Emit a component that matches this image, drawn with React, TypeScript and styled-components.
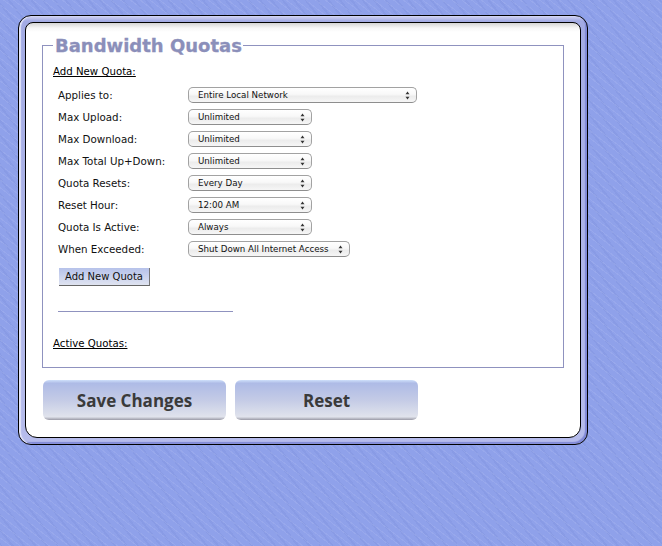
import React from 'react';
import styled, { createGlobalStyle } from 'styled-components';

const GlobalStyle = createGlobalStyle`
  html, body {
    margin: 0;
    padding: 0;
    height: 100%;
    background-color: #8fa1ea;
    background-image:
      repeating-linear-gradient(38deg, rgba(255,255,255,0.08) 0 1px, transparent 1px 6px),
      repeating-linear-gradient(52deg, rgba(60,80,170,0.07) 0 2px, transparent 2px 9px);
    font-family: "DejaVu Sans", Verdana, sans-serif;
  }
`;

const Page = styled.div`
  width: 662px;
  height: 546px;
  padding: 15px 0 0 18px;
  box-sizing: border-box;
  overflow: hidden;
`;

const Frame = styled.div`
  width: 570px;
  height: 430px;
  box-sizing: border-box;
  border: 1px solid #000;
  border-radius: 13px;
  padding: 6px;
  background: linear-gradient(to bottom, #d4d6f4 0, #a3abe4 5px, #b6bcec 100%);
  box-shadow: inset 2px 0 1px #e2e4f8, inset -2px -2px 1px #7f88d6;
`;

const Inner = styled.div`
  height: 100%;
  box-sizing: border-box;
  border: 1px solid #000;
  border-radius: 8px 8px 12px 12px;
  background: linear-gradient(to bottom, #d4d4d4 0, #f6f6f6 5px, #fff 9px);
  padding: 10px 16px 0 16px;
`;

const Fieldset = styled.fieldset`
  margin: 0;
  width: 522px;
  height: 335px;
  box-sizing: border-box;
  border: 1px solid #8f92bf;
  padding: 8px 10px 0;
`;

const Legend = styled.legend`
  margin-left: 0;
  padding: 2px 1px 0 2px;
  font-family: "DejaVu Sans", Verdana, sans-serif;
  font-size: 18px;
  line-height: 22px;
  font-weight: 700;
  color: #8b8fba;
  -webkit-text-stroke: 0.3px #8b8fba;
`;

const SectionTitle = styled.div`
  font-size: 10.2px;
  line-height: 14px;
  color: #000;
  text-decoration: underline;
`;

const Rows = styled.div`
  margin: 8px 0 0 5px;
  display: flex;
  flex-direction: column;
  gap: 6px;
`;

const Row = styled.div`
  display: flex;
  align-items: center;
  height: 16px;
`;

const Label = styled.span`
  width: 130px;
  font-size: 10.3px;
  line-height: 14px;
  margin-top: -1px;
  color: #111;
  white-space: nowrap;
`;

const Select = styled.div<{ $width: number }>`
  width: ${(props) => props.$width}px;
  height: 16px;
  box-sizing: border-box;
  display: flex;
  align-items: center;
  justify-content: space-between;
  padding: 0 6px 0 9px;
  border: 1px solid #a2a2a2;
  border-bottom-color: #8e8e8e;
  border-radius: 5px;
  background: linear-gradient(to bottom, #fff 0, #f8f8f8 45%, #ececec 60%, #f6f6f6 100%);
  font-size: 8.7px;
  color: #111;
  white-space: nowrap;
`;

const AddButton = styled.button`
  display: block;
  margin: 11px 0 0 6px;
  width: 91px;
  height: 18px;
  padding: 0;
  border: 0;
  border-right: 1px solid #777;
  border-bottom: 1px solid #666;
  background: linear-gradient(to bottom, #b6c2ea 0, #dfe3f0 100%);
  font-family: "DejaVu Sans", Verdana, sans-serif;
  font-size: 10px;
  color: #111;
`;

const Rule = styled.hr`
  margin: 25px 0 0 5px;
  width: 175px;
  height: 1px;
  border: 0;
  background: #8f92bf;
`;

const ActiveTitle = styled(SectionTitle)`
  margin-top: 25px;
`;

const Actions = styled.div`
  margin: 12px 0 0 1px;
  display: flex;
  gap: 9px;
`;

const BigButton = styled.button`
  width: 183px;
  height: 40px;
  padding: 0;
  border: 0;
  border-radius: 6px;
  background: linear-gradient(to bottom, #cfe0fb 0, #aebbe6 8%, #c4cbe6 50%, #e0e3ec 92%, #9a9aa6 100%);
  font-family: "Open Sans", "DejaVu Sans", sans-serif;
  font-size: 17px;
  font-weight: 700;
  color: #3a3a3a;
`;

const rows = [
  { label: 'Applies to:', value: 'Entire Local Network', width: 229 },
  { label: 'Max Upload:', value: 'Unlimited', width: 124 },
  { label: 'Max Download:', value: 'Unlimited', width: 124 },
  { label: 'Max Total Up+Down:', value: 'Unlimited', width: 124 },
  { label: 'Quota Resets:', value: 'Every Day', width: 124 },
  { label: 'Reset Hour:', value: '12:00 AM', width: 124 },
  { label: 'Quota Is Active:', value: 'Always', width: 124 },
  { label: 'When Exceeded:', value: 'Shut Down All Internet Access', width: 162 },
];

function Arrows() {
  return (
    <svg width="5" height="9" viewBox="0 0 5 9">
      <path d="M2.5 0.5L4.5 3.2H0.5Z" fill="#333" />
      <path d="M2.5 8.5L4.5 5.8H0.5Z" fill="#333" />
    </svg>
  );
}

export default function App() {
  return (
    <>
      <GlobalStyle />
      <Page>
        <Frame>
          <Inner>
            <Fieldset>
              <Legend>Bandwidth Quotas</Legend>
              <SectionTitle>Add New Quota:</SectionTitle>
              <Rows>
                {rows.map((row) => (
                  <Row key={row.label}>
                    <Label>{row.label}</Label>
                    <Select $width={row.width}>
                      {row.value}
                      <Arrows />
                    </Select>
                  </Row>
                ))}
              </Rows>
              <AddButton>Add New Quota</AddButton>
              <Rule />
              <ActiveTitle>Active Quotas:</ActiveTitle>
            </Fieldset>
            <Actions>
              <BigButton>Save Changes</BigButton>
              <BigButton>Reset</BigButton>
            </Actions>
          </Inner>
        </Frame>
      </Page>
    </>
  );
}
